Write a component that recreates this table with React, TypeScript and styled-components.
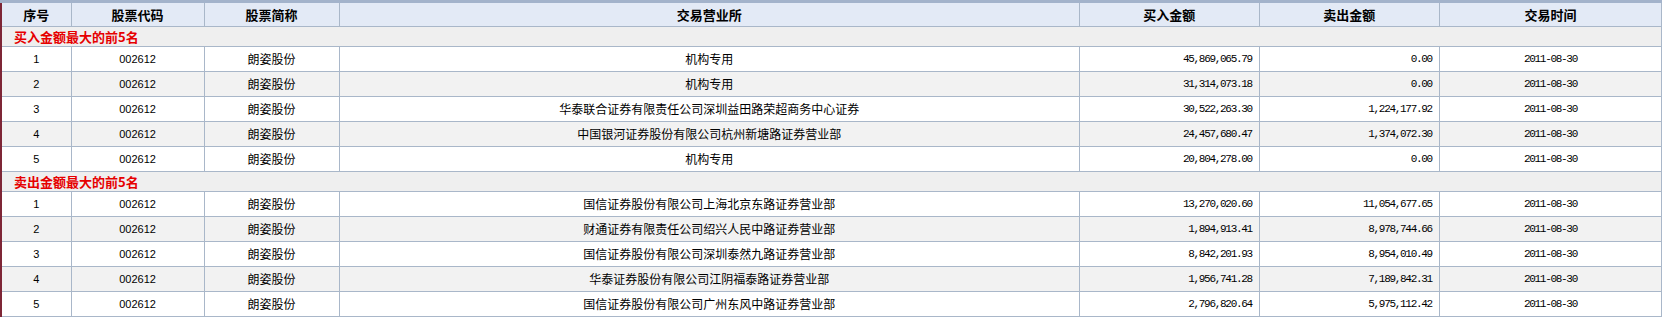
import React from "react";
import styled, { createGlobalStyle } from "styled-components";

const Global = createGlobalStyle`
  html, body { margin: 0; padding: 0; background: #ffffff; }
  body { font-family: "Liberation Sans", "Noto Sans CJK SC", sans-serif; }
`;

const Table = styled.table`
  width: 1662px;
  table-layout: fixed;
  border-collapse: collapse;
  border-left: 2px solid #7e2636;
  color: #000;
`;

const HeadCell = styled.th`
  height: 23px;
  padding: 0;
  background: #e3eaf6;
  border: 1px solid #a9b7c9;
  border-top: 3px solid #a3b3cb;
  font-family: "Noto Sans CJK SC", sans-serif;
  font-size: 13px;
  font-weight: bold;
  text-align: center;
  vertical-align: middle;
`;

const SectionCell = styled.td`
  height: 19px;
  padding: 0 0 0 12px;
  background: #efefef;
  border: 1px solid #a9b7c9;
  color: #e60000;
  font-family: "Noto Sans CJK SC", sans-serif;
  font-size: 13px;
  font-weight: bold;
  line-height: 17px;
  text-align: left;
  vertical-align: middle;
`;

const Row = styled.tr<{ $alt: boolean }>`
  height: 25px;
  background: ${(p) => (p.$alt ? "#f2f2f2" : "#ffffff")};
`;

const Cell = styled.td<{ $kind: "plain" | "cjk" | "num" | "date" }>`
  padding: ${(p) => (p.$kind === "num" ? "0 7px 0 0" : "0")};
  border: 1px solid #a9b7c9;
  vertical-align: middle;
  white-space: nowrap;
  overflow: hidden;
  line-height: 16px;
  text-align: ${(p) => (p.$kind === "num" ? "right" : "center")};
  font-family: ${(p) =>
    p.$kind === "num" || p.$kind === "date"
      ? '"Liberation Mono", monospace'
      : p.$kind === "cjk"
      ? '"Noto Sans CJK SC", sans-serif'
      : '"Liberation Sans", sans-serif'};
  font-size: ${(p) => (p.$kind === "cjk" ? "12px" : "11px")};
  letter-spacing: ${(p) =>
    p.$kind === "num" || p.$kind === "date" ? "-1.3px" : "0"};
`;

type Item = { buy: string; sell: string; dept: string };

const buyTop: Item[] = [
  { dept: "机构专用", buy: "45,869,065.79", sell: "0.00" },
  { dept: "机构专用", buy: "31,314,073.18", sell: "0.00" },
  {
    dept: "华泰联合证券有限责任公司深圳益田路荣超商务中心证券",
    buy: "30,522,263.30",
    sell: "1,224,177.92",
  },
  {
    dept: "中国银河证券股份有限公司杭州新塘路证券营业部",
    buy: "24,457,680.47",
    sell: "1,374,072.30",
  },
  { dept: "机构专用", buy: "20,804,278.00", sell: "0.00" },
];

const sellTop: Item[] = [
  {
    dept: "国信证券股份有限公司上海北京东路证券营业部",
    buy: "13,270,020.60",
    sell: "11,054,677.65",
  },
  {
    dept: "财通证券有限责任公司绍兴人民中路证券营业部",
    buy: "1,894,913.41",
    sell: "8,978,744.66",
  },
  {
    dept: "国信证券股份有限公司深圳泰然九路证券营业部",
    buy: "8,842,201.93",
    sell: "8,954,010.49",
  },
  {
    dept: "华泰证券股份有限公司江阴福泰路证券营业部",
    buy: "1,956,741.28",
    sell: "7,189,842.31",
  },
  {
    dept: "国信证券股份有限公司广州东风中路证券营业部",
    buy: "2,796,820.64",
    sell: "5,975,112.42",
  },
];

const widths = [70, 133, 135, 740, 180, 180, 222];
const heads = ["序号", "股票代码", "股票简称", "交易营业所", "买入金额", "卖出金额", "交易时间"];

function Block({ title, items }: { title: string; items: Item[] }) {
  return (
    <>
      <tr>
        <SectionCell colSpan={7}>{title}</SectionCell>
      </tr>
      {items.map((it, i) => (
        <Row key={i} $alt={i % 2 === 1}>
          <Cell $kind="plain">{i + 1}</Cell>
          <Cell $kind="plain">002612</Cell>
          <Cell $kind="cjk">朗姿股份</Cell>
          <Cell $kind="cjk">{it.dept}</Cell>
          <Cell $kind="num">{it.buy}</Cell>
          <Cell $kind="num">{it.sell}</Cell>
          <Cell $kind="date">2011-08-30</Cell>
        </Row>
      ))}
    </>
  );
}

export default function App() {
  return (
    <>
      <Global />
      <Table>
        <colgroup>
          {widths.map((w, i) => (
            <col key={i} style={{ width: w }} />
          ))}
        </colgroup>
        <thead>
          <tr>
            {heads.map((h) => (
              <HeadCell key={h}>{h}</HeadCell>
            ))}
          </tr>
        </thead>
        <tbody>
          <Block title="买入金额最大的前5名" items={buyTop} />
          <Block title="卖出金额最大的前5名" items={sellTop} />
        </tbody>
      </Table>
    </>
  );
}
